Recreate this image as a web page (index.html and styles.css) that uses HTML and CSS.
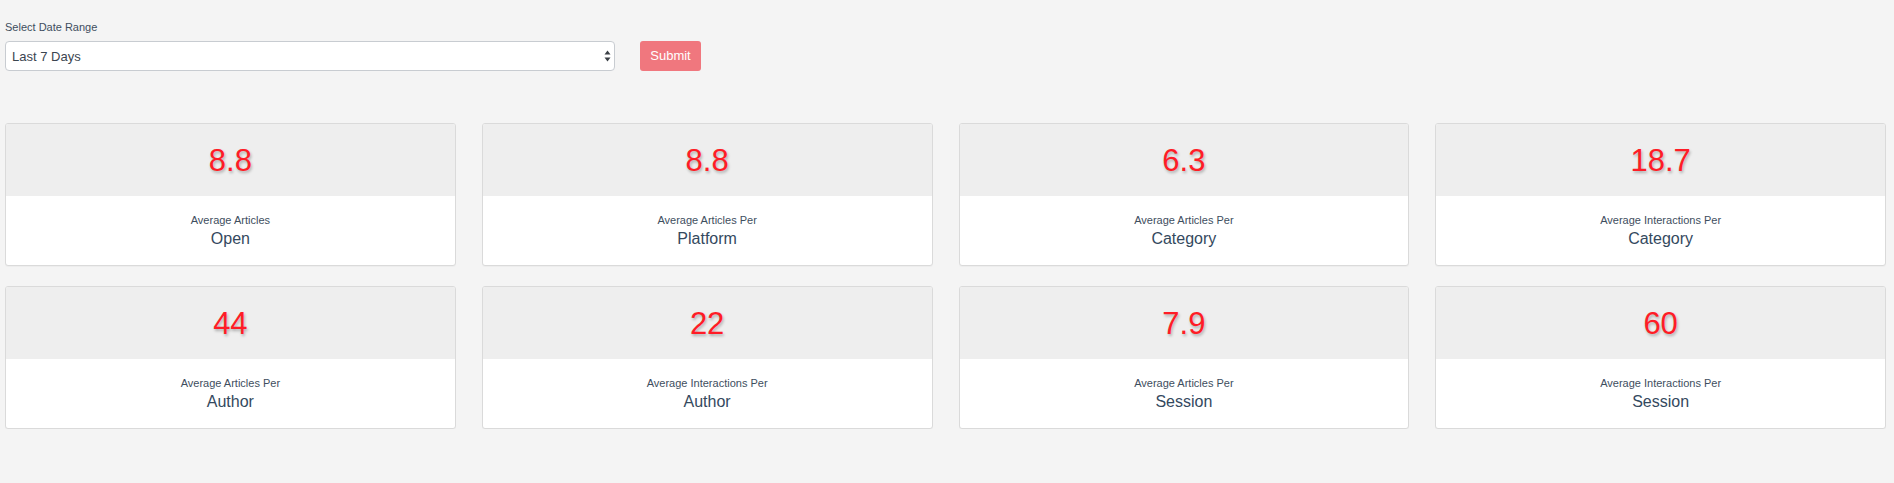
FILE: index.html
```html
<!DOCTYPE html>
<html lang="en">
<head>
<meta charset="utf-8">
<title>Dashboard</title>
<link rel="stylesheet" href="styles.css">
</head>
<body>
<div class="page">
  <form class="filter">
    <div class="filter-group">
      <label class="filter-label" for="range">Select Date Range</label>
      <div class="select-wrap">
        <select id="range" class="select">
          <option>Last 7 Days</option>
          <option>Last 30 Days</option>
          <option>Last 90 Days</option>
        </select>
        <svg class="select-arrows" width="7" height="12" viewBox="0 0 7 12" aria-hidden="true">
          <path d="M3.5 0.5 L6.5 4.6 L0.5 4.6 Z" fill="#3a3f45"/>
          <path d="M3.5 11.5 L6.5 7.4 L0.5 7.4 Z" fill="#3a3f45"/>
        </svg>
      </div>
    </div>
    <button type="button" class="btn-submit">Submit</button>
  </form>

  <div class="cards">
    <div class="card"><div class="card-head"><span class="stat">8.8</span></div><div class="card-body"><div class="card-sub">Average Articles</div><div class="card-title">Open</div></div></div>
    <div class="card"><div class="card-head"><span class="stat">8.8</span></div><div class="card-body"><div class="card-sub">Average Articles Per</div><div class="card-title">Platform</div></div></div>
    <div class="card"><div class="card-head"><span class="stat">6.3</span></div><div class="card-body"><div class="card-sub">Average Articles Per</div><div class="card-title">Category</div></div></div>
    <div class="card"><div class="card-head"><span class="stat">18.7</span></div><div class="card-body"><div class="card-sub">Average Interactions Per</div><div class="card-title">Category</div></div></div>
    <div class="card"><div class="card-head"><span class="stat">44</span></div><div class="card-body"><div class="card-sub">Average Articles Per</div><div class="card-title">Author</div></div></div>
    <div class="card"><div class="card-head"><span class="stat">22</span></div><div class="card-body"><div class="card-sub">Average Interactions Per</div><div class="card-title">Author</div></div></div>
    <div class="card"><div class="card-head"><span class="stat">7.9</span></div><div class="card-body"><div class="card-sub">Average Articles Per</div><div class="card-title">Session</div></div></div>
    <div class="card"><div class="card-head"><span class="stat">60</span></div><div class="card-body"><div class="card-sub">Average Interactions Per</div><div class="card-title">Session</div></div></div>
  </div>
</div>
</body>
</html>
```

FILE: styles.css
```css
* { box-sizing: border-box; }

html, body {
  margin: 0;
  padding: 0;
  background: #f4f4f4;
  font-family: "Liberation Sans", Arial, Helvetica, sans-serif;
  color: #34495e;
}

.page {
  padding: 19px 8px 0 5px;
}

.filter {
  display: flex;
  align-items: flex-end;
  gap: 25px;
  margin: 0;
}

.filter-group {
  display: flex;
  flex-direction: column;
}

.filter-label {
  font-size: 11px;
  line-height: 16px;
  color: #3e4e5e;
  margin-bottom: 6px;
}

.select-wrap {
  position: relative;
  width: 610px;
  height: 30px;
}

.select {
  -webkit-appearance: none;
  appearance: none;
  display: block;
  width: 100%;
  height: 30px;
  margin: 0;
  padding: 0 20px 0 6px;
  border: 1px solid #c8ccd1;
  border-radius: 4px;
  background: #ffffff;
  font-family: "Liberation Sans", Arial, Helvetica, sans-serif;
  font-size: 13px;
  color: #3b4550;
  outline: none;
}

.select-arrows {
  position: absolute;
  right: 4px;
  top: 9px;
  pointer-events: none;
}

.btn-submit {
  width: 61px;
  height: 30px;
  padding: 0;
  border: none;
  border-radius: 3px;
  background: #f0777e;
  color: #ffffff;
  font-family: "Liberation Sans", Arial, Helvetica, sans-serif;
  font-size: 13px;
  line-height: 30px;
  cursor: pointer;
}

.cards {
  margin-top: 52px;
  display: grid;
  grid-template-columns: repeat(4, 1fr);
  column-gap: 26px;
  row-gap: 20px;
}

.card {
  border: 1px solid #dadada;
  border-radius: 3px;
  background: #ffffff;
  overflow: hidden;
  box-shadow: 0 1px 1px rgba(0, 0, 0, 0.03);
}

.card-head {
  height: 72px;
  padding-top: 2px;
  background: #eeeeee;
  text-align: center;
  line-height: 70px;
}

.stat {
  font-size: 31px;
  color: #ff1c26;
  text-shadow: 1px 2px 3px rgba(0, 0, 0, 0.28);
}

.card-body {
  height: 69px;
  padding-top: 16px;
  text-align: center;
}

.card-sub {
  font-size: 11px;
  line-height: 16px;
  color: #3e4e5e;
}

.card-title {
  margin-top: 2px;
  font-size: 16px;
  line-height: 18px;
  color: #34495e;
}
```
